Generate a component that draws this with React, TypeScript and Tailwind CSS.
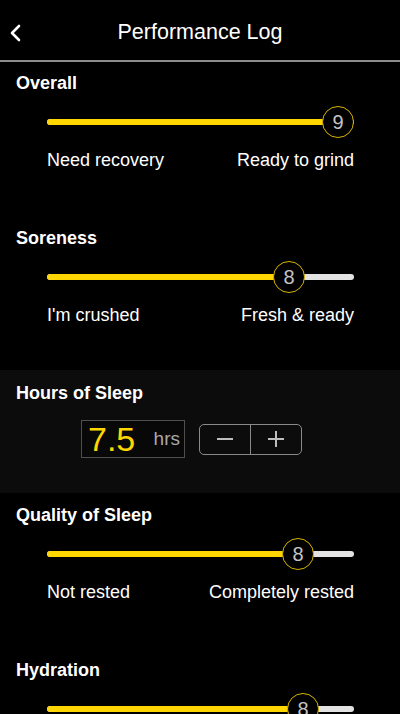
import React from "react";

const FONT = { fontFamily: '"Liberation Sans", Arial, sans-serif' };

function SliderSection({ title, center, value, left, right, padTop, padBottom = "pb-[44px]" }: { title: string; center: number; value: number; left?: string; right?: string; padTop: string; padBottom?: string }) {
  const pos = center - 47;
  return (
    <div className={`${padTop} ${padBottom}`}>
      <div className="pl-4 text-[18px] leading-[22px] font-bold text-white">{title}</div>
      <div className="mt-[12px] pl-[47px] pr-[46px]">
        <div className="relative h-8 flex items-center">
          <div className="h-[6px] w-full rounded-full bg-[#e3e3e3] overflow-hidden">
            <div className="h-full bg-[#ffd600] rounded-full" style={{ width: pos }} />
          </div>
          <div
            className="absolute top-0 w-8 h-8 -ml-4 rounded-full border-[1.5px] border-[#d9b400] bg-black flex items-center justify-center text-[20px] text-[#c4c4c4]"
            style={{ left: pos }}
          >
            {value}
          </div>
        </div>
      </div>
      {left !== undefined && (
        <div className="mt-[11px] pl-[47px] pr-[46px] flex justify-between text-[18px] leading-[22px] text-white">
          <span>{left}</span>
          <span>{right}</span>
        </div>
      )}
    </div>
  );
}

export default function App() {
  return (
    <div className="w-[400px] h-[714px] overflow-hidden bg-black text-white" style={FONT}>
      <div className="relative h-[60px] flex items-center justify-center">
        <svg className="absolute left-[9px] top-[24px]" width="14" height="18" viewBox="0 0 14 18">
          <polyline points="10,2 3,9 10,16" fill="none" stroke="white" strokeWidth="2.6" strokeLinecap="round" strokeLinejoin="round" />
        </svg>
        <div className="text-[21.5px] leading-[26px] text-white pt-[4px]">Performance Log</div>
      </div>
      <div className="h-[2px] bg-[#8c8c8c]" />

      <SliderSection title="Overall" center={338} value={9} left="Need recovery" right="Ready to grind" padTop="pt-[10px]" padBottom="pb-[45px]" />
      <SliderSection title="Soreness" center={289} value={8} left="I'm crushed" right="Fresh & ready" padTop="pt-[11px]" padBottom="pb-[44px]" />

      <div className="bg-[#0c0c0c] pt-[12px] pb-[35px]">
        <div className="pl-4 text-[18px] leading-[22px] font-bold text-white">Hours of Sleep</div>
        <div className="mt-[16px] flex items-center pl-[81px] gap-[14px]">
          <div className="w-[104px] h-[38px] border border-[#4f4f4f] bg-[#080808] flex items-center pl-[6px]">
            <span className="text-[34px] leading-none text-[#ffd600]">7.5</span>
            <span className="ml-auto mr-[4px] text-[19px] text-[#a8a8a8]">hrs</span>
          </div>
          <div className="w-[103px] h-[31px] border border-[#8a8a8a] rounded-[5px] flex">
            <div className="flex-1 flex items-center justify-center border-r border-[#8a8a8a]">
              <div className="w-[16px] h-[1.5px] bg-[#bdbdbd]" />
            </div>
            <div className="flex-1 flex items-center justify-center">
              <div className="relative w-[16px] h-[16px]">
                <div className="absolute left-0 top-[7px] w-[16px] h-[1.5px] bg-[#bdbdbd]" />
                <div className="absolute top-0 left-[7px] h-[16px] w-[1.5px] bg-[#bdbdbd]" />
              </div>
            </div>
          </div>
        </div>
      </div>

      <SliderSection title="Quality of Sleep" center={298} value={8} left="Not rested" right="Completely rested" padTop="pt-[11px]" padBottom="pb-[45px]" />
      <SliderSection title="Hydration" center={303} value={8} padTop="pt-[11px]" padBottom="pb-0" />
    </div>
  );
}
